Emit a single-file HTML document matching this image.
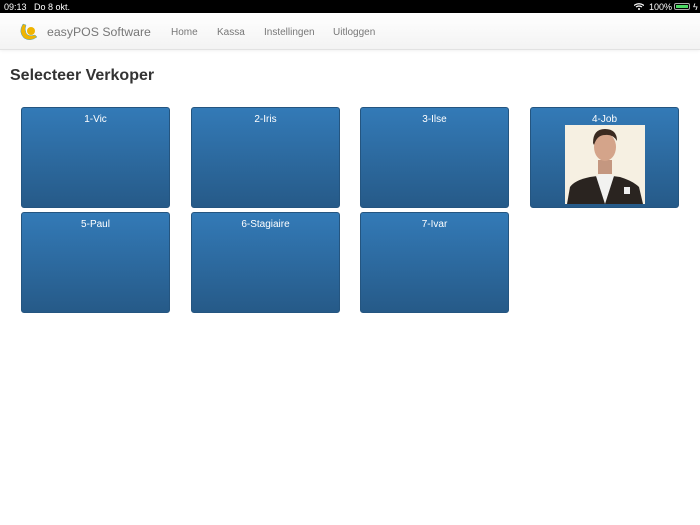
<!DOCTYPE html>
<html><head><style>
*{margin:0;padding:0;box-sizing:border-box}
body{width:700px;height:525px;background:#fff;font-family:"Liberation Sans",sans-serif;position:relative;overflow:hidden}
.sb{position:absolute;left:0;top:0;width:700px;height:13px;background:#000;color:#fff;font-size:9px;line-height:14px}
.nav{position:absolute;left:0;top:13px;width:700px;height:37px;background:linear-gradient(#fff,#f3f3f3);border-bottom:1px solid #e2e2e2;box-shadow:0 1px 3px rgba(0,0,0,.06)}
.nav span{position:absolute;top:14px;font-size:10px;color:#777}
h1{position:absolute;left:10px;top:67px;font-size:16px;font-weight:bold;color:#333}
.t{position:absolute;width:149px;height:101px;border-radius:3px;background:linear-gradient(#337ab7,#265a88);border:1px solid #245580;color:#fff;font-size:10px;text-align:center;padding-top:6px}
</style></head><body>
<div class="sb"><span style="position:absolute;left:4px">09:13</span><span style="position:absolute;left:34px">Do 8 okt.</span>
<svg style="position:absolute;left:634px;top:3px" width="10" height="7" viewBox="0 0 10 7"><path d="M0 2.5Q5 -1 10 2.5M2 4Q5 2 8 4" stroke="#fff" stroke-width="1.2" fill="none"/><circle cx="5" cy="6" r="1" fill="#fff"/></svg>
<span style="position:absolute;left:649px">100%</span>
<div style="position:absolute;left:674px;top:3px;width:16px;height:7px;border:1px solid #aaa;border-radius:2px;padding:1px"><div style="width:100%;height:100%;background:#4cd964"></div></div>
<span style="position:absolute;left:693px">ϟ</span></div>
<div class="nav">
<svg style="position:absolute;left:19px;top:10px" width="20" height="18" viewBox="0 0 20 18"><path d="M4 1Q-1 9 5 15Q11 19 18 14L16 12Q9 14 7 10Q5.5 6 7 2Z" fill="#f0b400" stroke="#4ba3c7" stroke-width=".5"/><circle cx="12" cy="8" r="4" fill="#f0b400"/></svg>
<span style="left:47px;top:12px;font-size:12.3px;color:#777">easyPOS Software</span>
<span style="left:171px">Home</span><span style="left:217px">Kassa</span><span style="left:264px">Instellingen</span><span style="left:333px">Uitloggen</span>
</div>
<h1>Selecteer Verkoper</h1>
<div class="t" style="left:21px;top:107px">1-Vic</div>
<div class="t" style="left:191px;top:107px">2-Iris</div>
<div class="t" style="left:360px;top:107px">3-Ilse</div>
<div class="t" style="left:530px;top:107px">4-Job
<div style="position:absolute;left:34px;top:17px;width:80px;height:79px;background:#f6f0e2;overflow:hidden">
<svg width="80" height="79" viewBox="0 0 80 79"><path d="M2 79L5 62Q10 55 25 52L40 50L55 52Q68 56 74 62L78 79Z" fill="#2a2420"/><path d="M31 51L40 79L49 51L40 48Z" fill="#f2f2f0"/><rect x="33" y="35" width="14" height="14" fill="#c49780"/><ellipse cx="40" cy="22" rx="11" ry="14" fill="#d4a48a"/><path d="M28 18Q28 4 40 4Q52 4 52 16Q48 9 40 10Q32 10 29 20Z" fill="#3a2a20"/><rect x="59" y="62" width="6" height="7" fill="#eee"/></svg></div></div>
<div class="t" style="left:21px;top:212px">5-Paul</div>
<div class="t" style="left:191px;top:212px">6-Stagiaire</div>
<div class="t" style="left:360px;top:212px">7-Ivar</div>
</body></html>
